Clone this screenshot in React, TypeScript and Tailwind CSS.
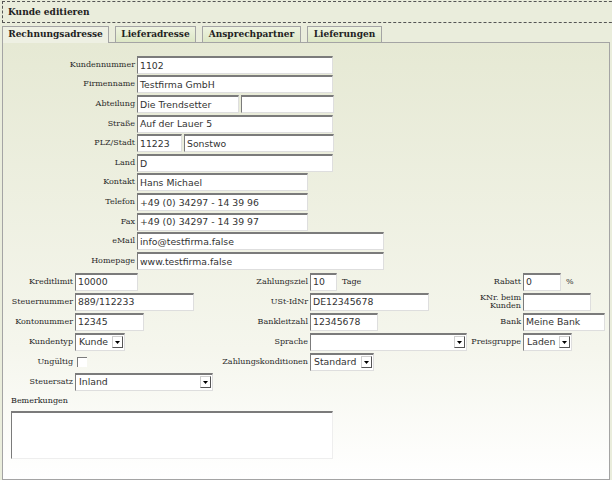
import React from "react";

const inp =
  "h-[18px] bg-white border-l border-r border-b border-t-2 border-t-[#7b7b7b] border-l-[#7b7b7b] border-r-[#dedede] border-b-[#dedede] px-[2px] font-['DejaVu_Sans',sans-serif] text-[9.3px] text-[#333] flex items-center leading-none whitespace-nowrap overflow-hidden";
const lbl = "text-right text-[8px] font-['DejaVu_Serif',serif] text-[#2a2a2a] leading-none self-center whitespace-nowrap";

function Inp({ w, v }: { w: string; v?: string }) {
  return <div className={`${inp} ${w}`}>{v}</div>;
}

function Sel({ w, v }: { w: string; v?: string }) {
  return (
    <div className={`${inp} ${w} justify-between pr-[1px]`}>
      <span className="pl-[1px]">{v}</span>
      <span className="w-[11px] h-[12px] bg-white border border-[#cfcfcf] border-r-[#555] border-b-[#555] flex items-center justify-center shrink-0">
        <svg width="5" height="3" viewBox="0 0 5 3">
          <path d="M0 0h5L2.5 3z" fill="#000" />
        </svg>
      </span>
    </div>
  );
}

function Row({ label, children }: { label: string; children: React.ReactNode }) {
  return (
    <>
      <div className={lbl}>{label}</div>
      <div className="flex items-center gap-[2px]">{children}</div>
    </>
  );
}

export default function App() {
  return (
    <div className="w-[612px] h-[480px] overflow-hidden bg-[#eaeddc] font-['DejaVu_Serif',serif] text-[#222]">
      <div className="pt-[1px] pl-[2px]">
        <div className="h-[22px] w-[640px] border border-dashed border-[#555] flex items-center pl-[5px] pt-[1px] font-bold text-[9px]">
          Kunde editieren
        </div>
      </div>
      <div className="flex items-end gap-[6px] pl-[2px] mt-[2px] h-[17px] text-[9px] font-bold">
        <div className="relative z-10 w-[107px] h-[17px] mb-[-1px] border border-b-0 border-[#a4a4a4] bg-[#eef0e3] flex items-center justify-center">
          Rechnungsadresse
        </div>
        <div className="w-[81px] h-[16px] border border-b-0 border-[#a4a4a4] bg-gradient-to-b from-[#eef3e0] to-[#dde7c6] flex items-center justify-center">
          Lieferadresse
        </div>
        <div className="w-[99px] h-[16px] border border-b-0 border-[#a4a4a4] bg-gradient-to-b from-[#eef3e0] to-[#dde7c6] flex items-center justify-center">
          Ansprechpartner
        </div>
        <div className="w-[75px] h-[16px] border border-b-0 border-[#a4a4a4] bg-gradient-to-b from-[#eef3e0] to-[#dde7c6] flex items-center justify-center">
          Lieferungen
        </div>
      </div>
      <div className="ml-[2px] w-[608px] h-[438px] border border-[#a4a4a4] bg-gradient-to-b from-[#e6e9d4] via-[#f5f6ed] via-70% to-white pt-[12px]">
        <div className="grid grid-cols-[132px_1fr] gap-x-[2px] auto-rows-[19.6px]">
          <Row label="Kundennummer">
            <Inp w="w-[196px]" v="1102" />
          </Row>
          <Row label="Firmenname">
            <Inp w="w-[196px]" v="Testfirma GmbH" />
          </Row>
          <Row label="Abteilung">
            <Inp w="w-[102px]" v="Die Trendsetter" />
            <Inp w="w-[93px]" />
          </Row>
          <Row label="Straße">
            <Inp w="w-[196px]" v="Auf der Lauer 5" />
          </Row>
          <Row label="PLZ/Stadt">
            <Inp w="w-[45px]" v="11223" />
            <Inp w="w-[150px]" v="Sonstwo" />
          </Row>
          <Row label="Land">
            <Inp w="w-[196px]" v="D" />
          </Row>
          <Row label="Kontakt">
            <Inp w="w-[171px]" v="Hans Michael" />
          </Row>
          <Row label="Telefon">
            <Inp w="w-[171px]" v="+49 (0) 34297 - 14 39 96" />
          </Row>
          <Row label="Fax">
            <Inp w="w-[171px]" v="+49 (0) 34297 - 14 39 97" />
          </Row>
          <Row label="eMail">
            <Inp w="w-[247px]" v="info@testfirma.false" />
          </Row>
          <Row label="Homepage">
            <Inp w="w-[247px]" v="www.testfirma.false" />
          </Row>
        </div>

        <div className="mt-[1px] grid grid-cols-[70px_140px_91px_159px_50px_1fr] gap-x-[2px] auto-rows-[20px]">
          <Row label="Kreditlimit">
            <Inp w="w-[63px]" v="10000" />
          </Row>
          <Row label="Zahlungsziel">
            <Inp w="w-[27px]" v="10" />
            <span className="ml-[3px] text-[8px]">Tage</span>
          </Row>
          <Row label="Rabatt">
            <Inp w="w-[38px]" v="0" />
            <span className="ml-[3px] text-[8px]">%</span>
          </Row>

          <Row label="Steuernummer">
            <Inp w="w-[119px]" v="889/112233" />
          </Row>
          <Row label="USt-IdNr">
            <Inp w="w-[119px]" v="DE12345678" />
          </Row>
          <div className={lbl}>
            KNr. beim
            <br />
            Kunden
          </div>
          <div className="flex items-center">
            <Inp w="w-[68px]" />
          </div>

          <Row label="Kontonummer">
            <Inp w="w-[69px]" v="12345" />
          </Row>
          <Row label="Bankleitzahl">
            <Inp w="w-[68px]" v="12345678" />
          </Row>
          <Row label="Bank">
            <Inp w="w-[82px]" v="Meine Bank" />
          </Row>

          <Row label="Kundentyp">
            <Sel w="w-[50px]" v="Kunde" />
          </Row>
          <Row label="Sprache">
            <Sel w="w-[157px]" />
          </Row>
          <Row label="Preisgruppe">
            <Sel w="w-[49px]" v="Laden" />
          </Row>

          <Row label="Ungültig">
            <div className="ml-[2px] w-[10px] h-[10px] bg-white border-t border-l border-[#7b7b7b]" />
          </Row>
          <Row label="Zahlungskonditionen">
            <Sel w="w-[64px]" v="Standard" />
          </Row>
          <div />
          <div />

          <Row label="Steuersatz">
            <Sel w="w-[138px]" v="Inland" />
          </Row>
          <div />
          <div />
          <div />
          <div />
        </div>

        <div className="pl-[8px] pt-[5px]">
          <div className="text-[8px] leading-none h-[14px]">Bemerkungen</div>
          <div className="w-[322px] h-[48px] bg-white border-l border-t-2 border-t-[#7b7b7b] border-l-[#7b7b7b] border-r border-b border-r-[#eeeeee] border-b-[#eeeeee]" />
        </div>
      </div>
    </div>
  );
}
